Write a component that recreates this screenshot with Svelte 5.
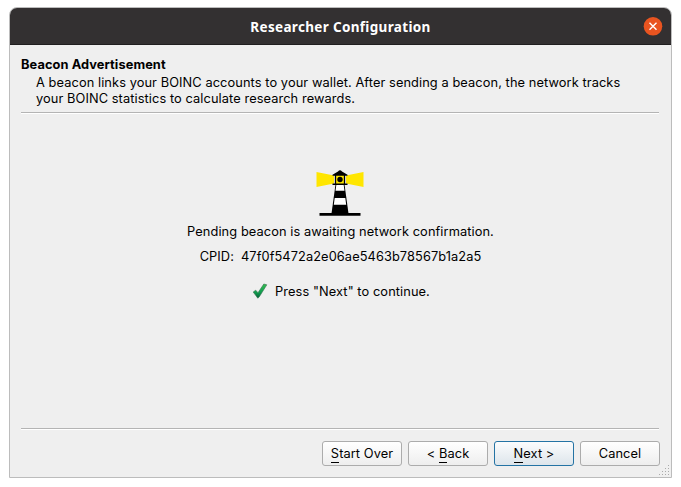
<script>
  const buttons = [
    { before: '', key: 'S', after: 'tart Over' },
    { before: '< ', key: 'B', after: 'ack' },
    { before: '', key: 'N', after: 'ext >', primary: true },
    { before: 'Cancel', key: '', after: '' }
  ];
  const gripDots = [[9, 0], [6, 3], [9, 3], [3, 6], [6, 6], [9, 6], [0, 9], [3, 9], [6, 9], [9, 9]];
</script>

<div class="desktop">
  <section class="window">
    <header class="titlebar">
      <h1>Researcher Configuration</h1>
      <button class="close" aria-label="Close">
        <svg width="20" height="19" viewBox="0 0 20 19">
          <circle cx="10" cy="9.300" r="9.3" fill="#e95420" />
          <path d="M6.500 5.800l7 7M13.500 5.800l-7 7" stroke="#fff" stroke-width="1.4" fill="none" />
        </svg>
      </button>
    </header>
    <div class="intro">
      <h2>Beacon Advertisement</h2>
      <p>A beacon links your BOINC accounts to your wallet. After sending a beacon, the network tracks<br />your BOINC statistics to calculate research rewards.</p>
    </div>
    <main>
      <svg class="lighthouse" width="48" height="48" viewBox="0 0 48 48">
        <path d="M0.5 2L18 5.5v8L0.5 17zM47.5 2L30 5.5v8L47.5 17z" fill="#ffe600" />
        <path d="M19 5h10v9H19z" fill="#ffe600" />
        <path d="M16.500 5.800v-1L22 1.400Q24 -1 26 1.400L31.500 4.800v1z" />
        <path d="M19.500 5v9M28.500 5v9" stroke="#000" stroke-width="1.300" />
        <circle cx="24" cy="9.500" r="2.700" />
        <path d="M16.500 13.400h15v1.500h-15z" />
        <path d="M19.500 14.500h9L32.500 43.500h-17z" />
        <path d="M20.300 15h7.400l.8 5.800h-9zM18.700 28h10.600l.9 6.700H17.800z" fill="#fff" />
        <path d="M3.500 43h41v2.700h-41z" />
      </svg>
      <p class="pending">Pending beacon is awaiting network confirmation.</p>
      <p class="cpid"><span>CPID:</span><span>47f0f5472a2e06ae5463b78567b1a2a5</span></p>
      <div class="ready">
        <svg width="16" height="16" viewBox="0 0 16 16">
          <defs>
            <linearGradient id="tick" x1="0" y1="0" x2="0" y2="1">
              <stop offset="0" stop-color="#35bd50" />
              <stop offset=".55" stop-color="#12a150" />
              <stop offset="1" stop-color="#08603a" />
            </linearGradient>
          </defs>
          <path d="M1.200 9L3.700 7.200L6 9.700L11.800 1L14.800 1.800L7.300 13.800L5.800 15.200z" fill="url(#tick)" stroke="#326e4c" stroke-width=".6" stroke-linejoin="round" />
        </svg>
        <span>Press "Next" to continue.</span>
      </div>
    </main>
    <footer>
      {#each buttons as b}
        <button class="action" class:primary={b.primary}><span>{b.before}{#if b.key}<span class="key">{b.key}</span>{/if}{b.after}</span></button>
      {/each}
    </footer>
    <svg class="grip" width="10" height="10" viewBox="0 0 10 10" shape-rendering="crispEdges">
      {#each gripDots as [x, y]}
        <rect {x} {y} width="1" height="1" fill="#aaa" />
      {/each}
    </svg>
  </section>
</div>

<style>
  :global(body) { background: #fff; }
  .desktop { box-sizing: border-box; width: 681px; height: 487px; padding: 7px 9px 9px; overflow: hidden; }
  .window {
    position: relative; box-sizing: border-box; width: 663px; height: 471px;
    display: flex; flex-direction: column;
    border: 1px solid #bcbcbc; border-radius: 8px 8px 0 0; background: #efefef;
    overflow: hidden; color: #000; font: 12.8px/16px Inter, sans-serif; letter-spacing: 0.09px;
  }
  h1, h2, p { margin: 0; }
  .titlebar {
    flex: none; box-sizing: border-box; height: 37px; display: grid;
    grid-template-columns: 28px 1fr 28px; align-items: center;
    background: #333031; border-bottom: 1px solid #201e1f;
  }
  h1 { grid-column: 2; text-align: center; color: #fff; font: bold 13.5px/20px "Noto Sans", sans-serif; letter-spacing: 0.33px; padding-top: 2px; white-space: nowrap; }
  .close { width: 20px; height: 19px; padding: 0; border: 0; background: none; display: block; }
  .close svg { display: block; }
  .intro {
    flex: none; box-sizing: border-box; height: 68px; margin: 0 12px 0 11px; padding-top: 11px;
    border-bottom: 1px solid #b4b4b4; box-shadow: 0 1px #fff;
  }
  h2 { font-size: 12.8px; line-height: 17px; font-weight: 700; }
  .intro p { padding: 2px 0 0 15px; white-space: nowrap; }
  main { flex: 1; display: flex; flex-direction: column; align-items: center; padding: 57px 1px 0 0; white-space: nowrap; }
  .lighthouse { display: block; flex: none; }
  .pending { margin-top: 6px; padding-left: 1px; }
  .cpid { margin-top: 9px; display: flex; gap: 7px; padding-left: 1px; }
  .ready { margin-top: 19px; display: flex; gap: 7px; align-items: center; padding-left: 2px; }
  .ready svg { margin-top: -2px; }
  footer {
    flex: none; box-sizing: border-box; height: 49px; margin: 0 12px 0 11px; padding-top: 12px;
    display: flex; gap: 6px; border-top: 1px solid #b4b4b4; box-shadow: inset 0 1px #fff;
  }
  .action {
    flex: none; box-sizing: border-box; width: 80px; height: 25px; padding: 0; border: 1px solid #acacac; border-radius: 3px;
    background: linear-gradient(#fff, #eeeeee); color: #000; font: 12.8px/23px Inter, sans-serif; letter-spacing: 0.09px; white-space: nowrap;
  }
  .action:first-child { margin-left: 301px; }
  .primary { border-color: #2473a4; background: linear-gradient(#fbfcfd, #dde5eb); }
  .key { display: inline-block; height: 16px; line-height: 16px; box-shadow: 0 1px #000; }
  .grip { position: absolute; right: 2px; bottom: 2px; }
</style>
